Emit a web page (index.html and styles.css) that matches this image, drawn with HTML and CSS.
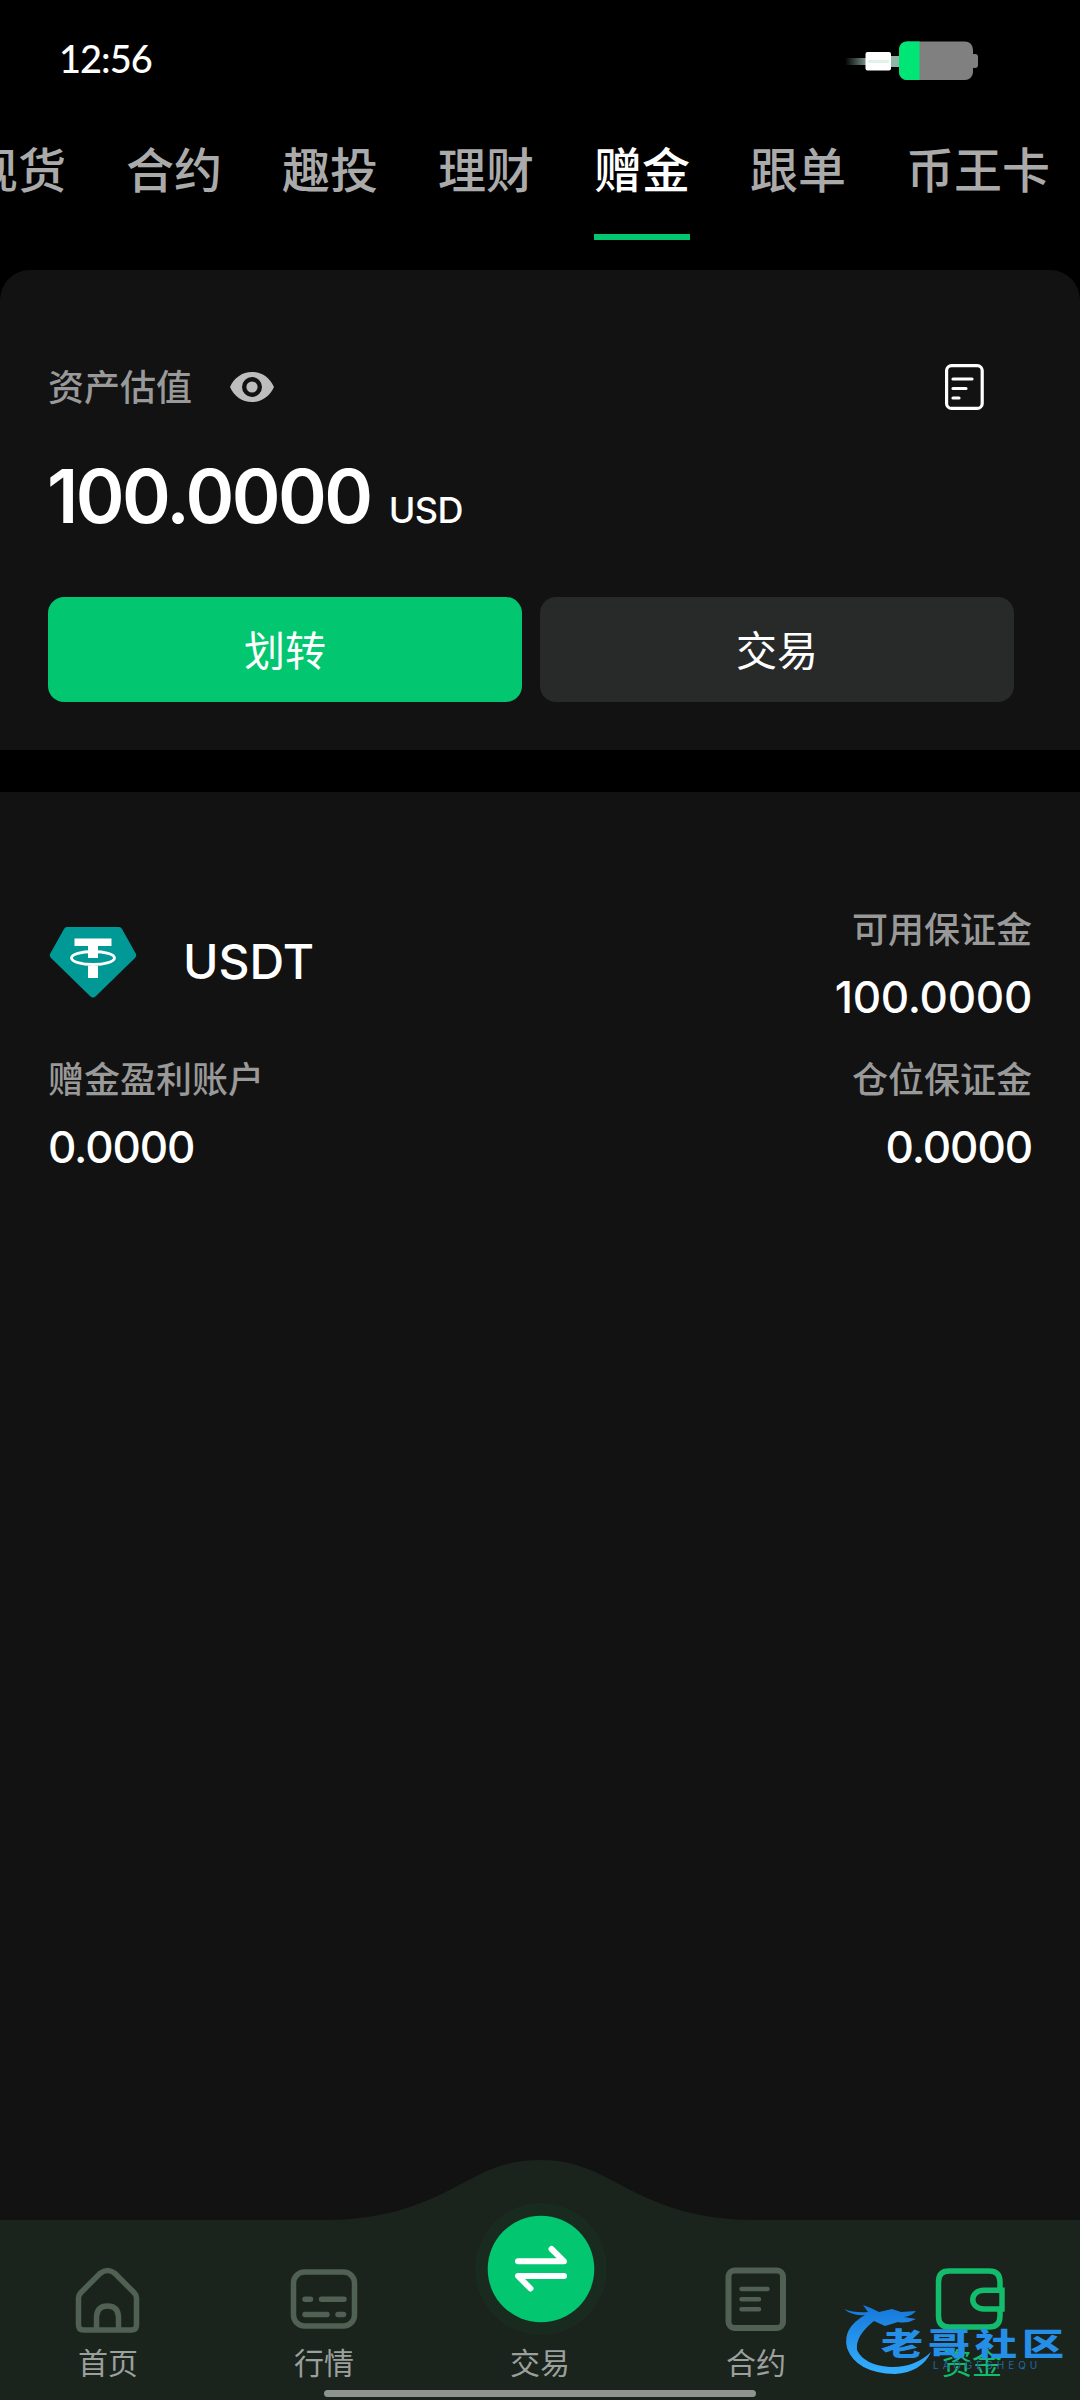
FILE: index.html
```html
<!DOCTYPE html>
<html lang="zh-CN">
<head>
<meta charset="utf-8">
<title>资金</title>
<link rel="stylesheet" href="styles.css">
</head>
<body>
<div class="screen">
  <header class="status">
    <span class="time">12:56</span>
    <svg class="battery" width="136" height="40" viewBox="844 41 136 40">
      <defs>
        <linearGradient id="cable" x1="0" x2="1"><stop offset="0" stop-color="#000"/><stop offset="1" stop-color="#77918a"/></linearGradient>
        <clipPath id="cell"><rect x="899" y="41.500" width="74" height="38.500" rx="8"/></clipPath>
      </defs>
      <rect x="845" y="58" width="21" height="7" fill="url(#cable)"/>
      <rect x="890" y="56" width="10" height="11" fill="#8fb5a5"/>
      <rect x="865.500" y="52" width="25.500" height="18.500" rx="2" fill="#fff"/>
      <rect x="868" y="60" width="21" height="3" fill="#e2f2ea"/>
      <g clip-path="url(#cell)"><rect x="899" y="41" width="75" height="40" fill="#808080"/><rect x="899" y="41" width="20.500" height="40" fill="#00e676"/></g>
      <rect x="971" y="54" width="7" height="14" rx="3" fill="#808080"/>
    </svg>
  </header>
  <nav class="tabs">
    <a class="tab">现货</a><a class="tab">合约</a><a class="tab">趣投</a><a class="tab">理财</a><a class="tab active">赠金</a><a class="tab">跟单</a><a class="tab">币王卡</a>
  </nav>
  <section class="summary">
    <div class="row summary-head">
      <span class="muted">资产估值</span>
      <svg class="eye" width="44" height="30" viewBox="0 0 44 30"><path fill="#bdbdbd" fill-rule="evenodd" d="M22 0C12 0 4 6 0 15c4 9 12 15 22 15s18-6 22-15C40 6 32 0 22 0Zm0 25a10 10 0 1 1 0-20 10 10 0 0 1 0 20Z"/><circle cx="22" cy="15" r="5.600" fill="#bdbdbd"/></svg>
      <svg class="doc" width="39" height="46" viewBox="0 0 39 46" fill="none" stroke="#fff" stroke-width="3.200" stroke-linecap="round"><rect x="1.600" y="1.600" width="35.600" height="42.800" rx="5"/><path d="M8 15h19M8 24.500h13M8 34h6"/></svg>
    </div>
    <div class="total"><span class="amount">100.0000</span><span class="unit">USD</span></div>
    <div class="actions"><button class="btn primary">划转</button><button class="btn">交易</button></div>
  </section>
  <main class="assets">
    <div class="row coin-row">
      <div class="coin">
        <svg width="88" height="72" viewBox="0 0 88 72"><path fill="#009996" d="M18 0H70Q72 0 73 2L87 27Q88 29 86 31L47 69Q44 72 41 69L2 31Q0 29 1 27L15 2Q16 0 18 0Z"/><path fill="#fff" d="M25.500 11.500h37v7.500H49v12h-10V19H25.500ZM39 39h10v12h-10Z"/><ellipse cx="44" cy="31" rx="21.500" ry="6.500" fill="none" stroke="#fff" stroke-width="2.800"/></svg>
        <span class="coin-name">USDT</span>
      </div>
      <div class="cell right"><span class="muted">可用保证金</span><span class="value">100.0000</span></div>
    </div>
    <div class="row">
      <div class="cell"><span class="muted">赠金盈利账户</span><span class="value zero">0.0000</span></div>
      <div class="cell right"><span class="muted">仓位保证金</span><span class="value zero">0.0000</span></div>
    </div>
  </main>
  <footer class="bottom">
    <svg class="hump" width="1080" height="240" viewBox="0 2160 1080 240"><path fill="#1b231d" d="M0 2220H325C390 2220 430 2201 465 2182C492 2167 512 2160 540 2160S588 2167 615 2182C650 2201 690 2220 755 2220H1080V2400H0Z"/></svg>
    <div class="items">
      <a class="item"><svg width="68" height="68" viewBox="74 2266 68 68" fill="none" stroke="#506053" stroke-width="5.500" stroke-linejoin="round"><path d="M78.500 2298Q78.500 2295 81 2292.500L100 2273.500Q107.500 2267.500 115 2273.500L134 2292.500Q136.500 2295 136.500 2298V2325Q136.500 2330 131.500 2330H83.500Q78.500 2330 78.500 2325ZM96.500 2330V2317Q97 2306 107.500 2306T118.500 2317V2330"/></svg>首页</a>
      <a class="item"><svg width="68" height="68" viewBox="290.500 2266 68 68" fill="none" stroke="#506053" stroke-width="5.500" stroke-linecap="round"><rect x="294" y="2272" width="61" height="54" rx="11"/><path d="M305.500 2299.300h5.500M322 2299.300h22.500M305.500 2314.500h22M338.500 2314.500h5.500"/></svg>行情</a>
      <a class="item"><svg class="trade" width="134" height="134" viewBox="473 2202 134 134"><circle cx="541" cy="2269" r="66" fill="#192a1f"/><circle cx="541" cy="2269" r="53.300" fill="#02c670"/><path d="M518 2261.300H564L551.500 2249M564 2276H518L530.500 2288.500" fill="none" stroke="#fff" stroke-width="6" stroke-linecap="round" stroke-linejoin="round"/></svg>交易</a>
      <a class="item"><svg width="68" height="68" viewBox="722 2266 68 68" fill="none" stroke="#506053" stroke-width="6" stroke-linecap="round"><rect x="728.500" y="2270.500" width="54.500" height="57.500" rx="6"/><path stroke-width="4.500" d="M741.500 2289h26M741.500 2299.200h17.500M741.500 2309.200h17.500"/></svg>合约</a>
      <a class="item on"><svg width="74" height="68" viewBox="936 2266 74 68" fill="none" stroke="#12bc6c" stroke-width="5.500"><path d="M1001 2289V2282Q1001 2271 990 2271H950Q939.500 2271 939.500 2282V2316Q939.500 2327 950 2327H990Q1001 2327 1001 2316V2310M1003 2290.200H985C970 2290.200 970 2309 985 2309H1003Z"/></svg>资金</a>
    </div>
    <div class="home-bar"></div>
  </footer>
  <div class="watermark">
    <svg width="110" height="74" viewBox="840 2302 110 74"><defs><linearGradient id="dragon" x1="0" x2="0" y1="0" y2="1"><stop offset="0" stop-color="#1577d8"/><stop offset="1" stop-color="#35b0ff"/></linearGradient></defs><path fill="url(#dragon)" d="M842 2309Q852 2313 866 2312L861 2305Q870 2308 877 2312L890 2309 899 2312 914 2311Q910 2316 902 2317L914 2319Q905 2324 896 2322L883 2326 872 2321Q853 2336 855 2350Q862 2365 888 2367Q912 2368 929 2352Q920 2372 893 2374Q854 2373 845 2348Q840 2328 863 2315Q850 2316 842 2309Z"/></svg>
    <div class="wm-text"><span class="wm-cn">老哥社区</span><span class="wm-en">LAOGESHEQU</span></div>
  </div>
</div>
</body>
</html>
```
FILE: styles.css
```css
* { box-sizing: border-box; }
body { margin: 0; background: #000; }
.screen {
  position: relative; width: 1080px; height: 2400px; overflow: hidden;
  display: flex; flex-direction: column; background: #000; color: #fff;
  font-family: Inter, "Noto Sans CJK SC", sans-serif;
}
.status { height: 122px; flex: none; display: flex; justify-content: space-between; align-items: flex-start; padding: 41px 100px 0 59px; }
.time { font: 500 38px/34px Lato, sans-serif; letter-spacing: -1px; }
.battery { display: block; }
.tabs { flex: none; height: 118px; display: flex; gap: 60px; margin-left: -30px; white-space: nowrap; }
.tab { flex: none; height: 118px; font-size: 48px; font-weight: 500; line-height: 97px; color: #aaa; }
.tab.active { color: #fff; border-bottom: 6px solid #02c670; }
.summary { flex: none; margin-top: 30px; height: 480px; padding: 94px 66px 0 48px; background: #121212; border-radius: 30px 30px 0 0; }
.row { display: flex; justify-content: space-between; }
.muted { font-size: 36px; line-height: 48px; height: 46px; font-weight: 500; color: #999; }
.summary-head { align-items: center; height: 46px; }
.eye { margin-left: 38px; margin-right: auto; }
.doc { margin-right: 30px; }
.total { display: flex; align-items: baseline; height: 100px; margin-top: 36px; margin-left: -1px; line-height: 100px; }
.amount { font-size: 74px; font-weight: 600; letter-spacing: -2.5px; }
.unit { font-size: 36px; font-weight: 500; letter-spacing: -.5px; margin-left: 18px; }
.actions { display: flex; gap: 18px; margin-top: 51px; margin-left: 0; }
.btn { flex: 1; height: 105px; padding: 0; border: 0; border-radius: 16px; background: #282a29; color: #fff; font: 41px/109px Inter, "Noto Sans CJK SC", sans-serif; }
.btn.primary { background: #02c670; }
.assets { flex: 1; margin-top: 42px; padding: 114px 48px 0; background: #121212; }
.coin-row { height: 150px; }
.coin { display: flex; align-items: center; height: 114px; gap: 46px; margin-left: 1px; }
.coin-name { font-size: 48px; line-height: 58px; font-weight: 500; margin-top: -2px; }
.cell { display: flex; flex-direction: column; }
.cell.right { align-items: flex-end; }
.value { font-size: 44px; line-height: 60px; margin-top: 15px; font-weight: 500; letter-spacing: -.3px; }
.value.zero { letter-spacing: -1.1px; }
.bottom { position: absolute; left: 0; bottom: 0; width: 1080px; height: 240px; }
.hump { position: absolute; left: 0; top: 0; }
.items { position: relative; display: grid; grid-template-columns: repeat(5, 216px); height: 240px; }
.item { display: flex; flex-direction: column; align-items: center; justify-content: flex-end; padding-bottom: 17px; gap: 9px; font-size: 30px; line-height: 40px; color: #9ba09c; }
.item .trade { margin-bottom: -2px; }
.item.on { color: #12bc6c; }
.home-bar { position: absolute; left: 324px; top: 230px; width: 432px; height: 7px; border-radius: 4px; background: #8e938f; }
.watermark { position: absolute; left: 842px; top: 2302px; width: 230px; }
.wm-text { position: absolute; left: 39px; top: 19px; display: flex; flex-direction: column; }
.wm-cn { font-family: "Noto Sans CJK SC", sans-serif; font-weight: 900; font-size: 42px; line-height: 42px; letter-spacing: 5px; color: #258fe7; white-space: nowrap; transform: scaleY(.73); }
.wm-en { margin: -4px 0 0 52px; font: 10px/12px Inter, sans-serif; letter-spacing: 4px; color: #226aa0; }
```
